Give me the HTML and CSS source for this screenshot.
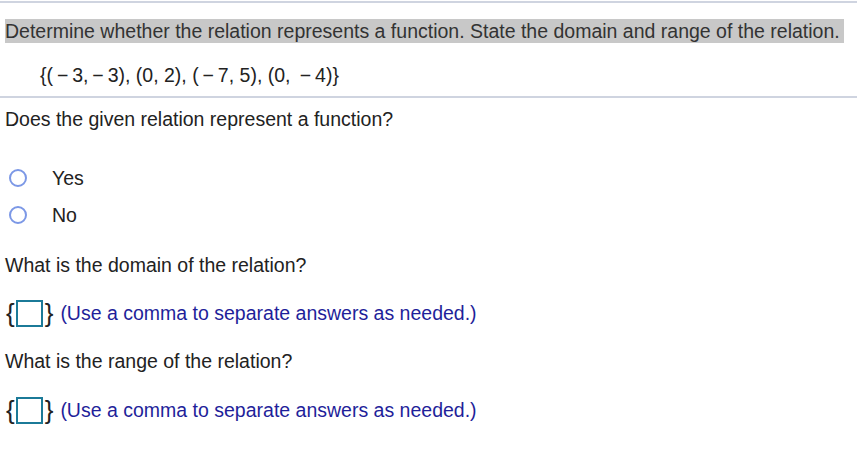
FILE: index.html
```html
<!DOCTYPE html>
<html>
<head>
<meta charset="utf-8">
<link rel="stylesheet" href="styles.css">
</head>
<body>
<div class="page">
  <div class="top-rule"></div>
  <div class="instructions"><span class="hl">Determine whether the relation represents a function. State the domain and range of the relation.</span></div>
  <div class="math">{(&#8201;&minus;&#8201;3,&#8201;&minus;&#8201;3), (0, 2), (&#8201;&minus;&#8201;7, 5), (0, &#8201;&minus;&#8201;4)}</div>
  <div class="rule"></div>
  <div class="q q1">Does the given relation represent a function?</div>
  <div class="options">
    <label class="opt"><span class="radio"></span><span>Yes</span></label>
    <label class="opt"><span class="radio"></span><span>No</span></label>
  </div>
  <div class="q q2">What is the domain of the relation?</div>
  <div class="answer"><span class="brace">{</span><span class="box"></span><span class="brace">}</span><span class="hint">(Use a comma to separate answers as needed.)</span></div>
  <div class="q q3">What is the range of the relation?</div>
  <div class="answer a2"><span class="brace">{</span><span class="box"></span><span class="brace">}</span><span class="hint">(Use a comma to separate answers as needed.)</span></div>
</div>
</body>
</html>
```
FILE: styles.css
```css
html, body { margin: 0; padding: 0; background: #fff; }
body { font-family: "Liberation Sans", Arial, sans-serif; font-size: 19.5px; color: #222; }
.page { width: 857px; }
.top-rule { height: 2px; background: #cfd4e0; margin-top: 1px; }
.instructions { margin-top: 16px; padding-left: 5px; line-height: 24px; }
.hl { background: #c8c8c8; color: #333; padding-right: 4px; display: inline-block; line-height: 24px; }
.math { margin-top: 22px; padding-left: 40px; line-height: 20px; }
.rule { height: 2px; background: #cfd4e0; margin-top: 11px; }
.q { padding-left: 5px; line-height: 22px; }
.q1 { margin-top: 10px; }
.options { margin-top: 37px; display: flex; flex-direction: column; gap: 15px; }
.opt { display: flex; align-items: center; height: 22px; }
.radio { width: 18px; height: 18px; border: 2px solid #7c98e6; border-radius: 50%; margin-left: 9px; margin-right: 25px; box-sizing: border-box; }
.q2 { margin-top: 28px; }
.answer { display: flex; align-items: center; padding-left: 6px; height: 30px; margin-top: 22px; }
.a2 { margin-top: 23px; }
.brace { font-size: 26px; line-height: 30px; color: #222; }
.box { width: 27px; height: 27px; border: 2px solid #1b7a98; box-sizing: border-box; margin: 0 2px 0 1px; }
.hint { color: #1f1f9a; margin-left: 7px; }
.q3 { margin-top: 22px; }
```
